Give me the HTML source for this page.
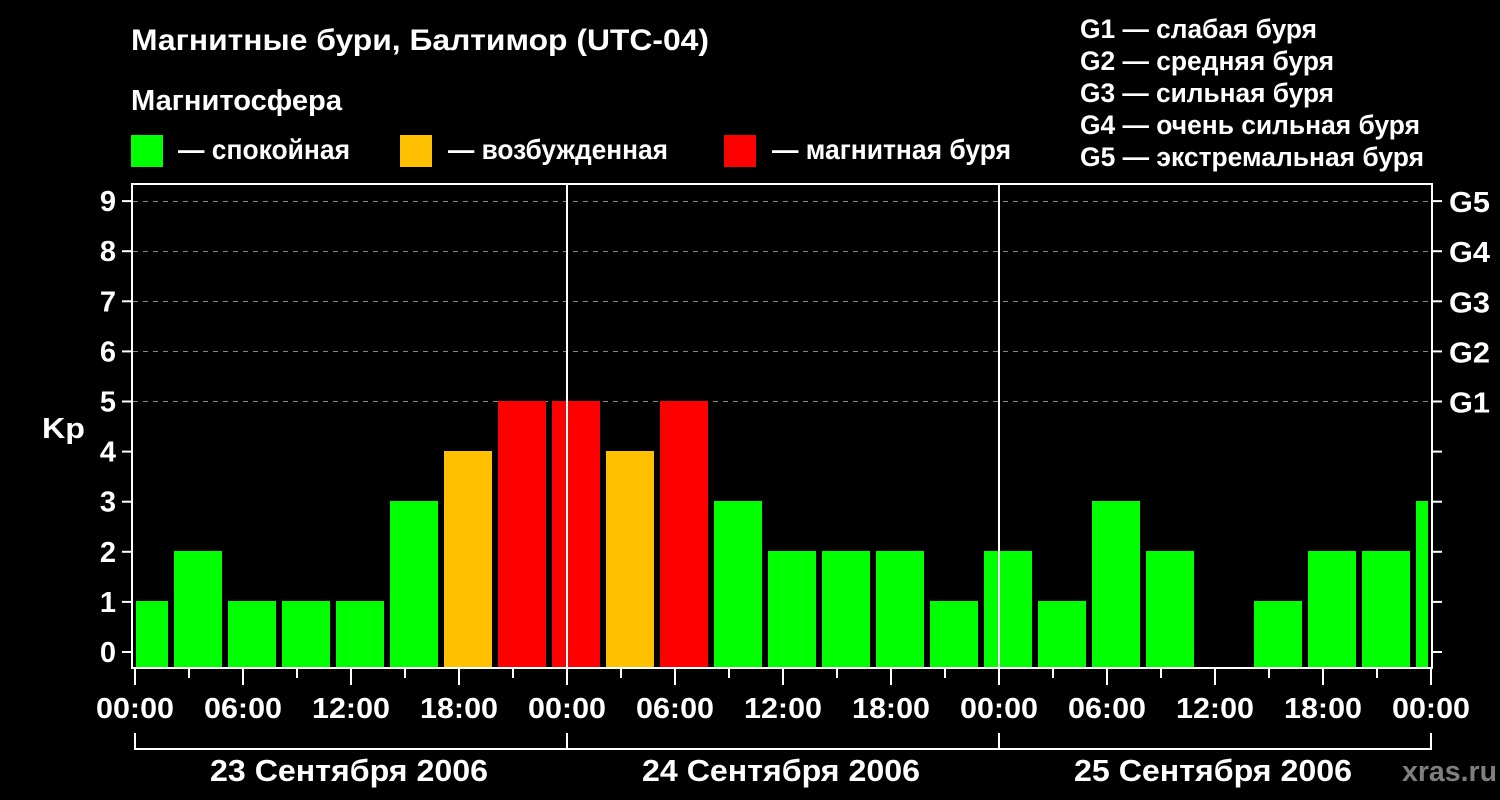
<!DOCTYPE html>
<html><head><meta charset="utf-8"><style>
html,body{margin:0;padding:0;background:#000;}
svg{display:block}
text{font-family:"Liberation Sans",sans-serif;font-weight:bold;fill:#fff}
</style></head><body>
<svg width="1500" height="800" viewBox="0 0 1500 800" xmlns="http://www.w3.org/2000/svg">
<rect width="1500" height="800" fill="#000"/>
<text x="131" y="50" font-size="30" textLength="578" lengthAdjust="spacingAndGlyphs">Магнитные бури, Балтимор (UTC-04)</text>
<text x="131" y="110" font-size="29" textLength="211" lengthAdjust="spacingAndGlyphs">Магнитосфера</text>
<rect x="131" y="135" width="32" height="32" fill="#00ff00"/>
<rect x="400" y="135" width="32" height="32" fill="#ffc000"/>
<rect x="724" y="135" width="32" height="32" fill="#ff0000"/>
<text x="178" y="159" font-size="28" textLength="172" lengthAdjust="spacingAndGlyphs">— спокойная</text>
<text x="448" y="159" font-size="28" textLength="220" lengthAdjust="spacingAndGlyphs">— возбужденная</text>
<text x="772" y="159" font-size="28" textLength="239" lengthAdjust="spacingAndGlyphs">— магнитная буря</text>
<g font-size="27">
<text x="1080" y="38" textLength="237" lengthAdjust="spacingAndGlyphs">G1 — слабая буря</text>
<text x="1080" y="70" textLength="254" lengthAdjust="spacingAndGlyphs">G2 — средняя буря</text>
<text x="1080" y="102" textLength="254" lengthAdjust="spacingAndGlyphs">G3 — сильная буря</text>
<text x="1080" y="134" textLength="340" lengthAdjust="spacingAndGlyphs">G4 — очень сильная буря</text>
<text x="1080" y="166" textLength="344" lengthAdjust="spacingAndGlyphs">G5 — экстремальная буря</text>
</g>
<g id="grid" stroke="#888" stroke-width="1" stroke-dasharray="5,5">
<line x1="133" y1="201.5" x2="1433" y2="201.5"/>
<line x1="133" y1="251.5" x2="1433" y2="251.5"/>
<line x1="133" y1="301.5" x2="1433" y2="301.5"/>
<line x1="133" y1="351.5" x2="1433" y2="351.5"/>
<line x1="133" y1="401.5" x2="1433" y2="401.5"/>
</g>
<g id="bars"></g>
<g stroke="#fff" stroke-width="2" fill="none">
<rect x="132" y="184" width="1300" height="484"/>
<line x1="567" y1="184" x2="567" y2="668"/>
<line x1="999" y1="184" x2="999" y2="668"/>
<polyline points="135,733 135,749 1431,749 1431,733"/>
<line x1="567" y1="733" x2="567" y2="749"/>
<line x1="999" y1="733" x2="999" y2="749"/>
</g>
<g id="ticks" stroke="#fff" stroke-width="2"></g>
<g id="labels" font-size="29"></g>
<text x="42" y="438" font-size="29" textLength="43" lengthAdjust="spacingAndGlyphs">Kp</text>
<g font-size="31" text-anchor="middle">
<text x="349" y="781" textLength="278" lengthAdjust="spacingAndGlyphs">23 Сентября 2006</text>
<text x="781" y="781" textLength="278" lengthAdjust="spacingAndGlyphs">24 Сентября 2006</text>
<text x="1213" y="781" textLength="278" lengthAdjust="spacingAndGlyphs">25 Сентября 2006</text>
</g>
<text x="1402" y="781" font-size="29" textLength="95" lengthAdjust="spacingAndGlyphs" style="fill:#7f7f7f">xras.ru</text>
</svg>
<script>
var ns="http://www.w3.org/2000/svg";
function el(p,t,a,txt){var e=document.createElementNS(ns,t);for(var k in a)e.setAttribute(k,a[k]);if(txt)e.textContent=txt;document.getElementById(p).appendChild(e);}
var v=[1,2,1,1,1,3,4,5,5,4,5,3,2,2,2,1,2,1,3,2,0,1,2,2,3];
function col(k){return k>=5?"#ff0000":(k==4?"#ffc000":"#00ff00");}
v.forEach(function(k,i){if(!k)return;var c=144+54*i,l=c-24,r=c+24;if(l<136)l=136;if(r>1428)r=1428;var top=652-50*k-1;el("bars","rect",{x:l,y:top,width:r-l,height:667-top,fill:col(k)});});
for(var k=0;k<=9;k++){var y=652-50.1*k;el("ticks","line",{x1:122,y1:y,x2:132,y2:y});el("ticks","line",{x1:1432,y1:y,x2:1442,y2:y});
el("labels","text",{x:116,y:y+10,"text-anchor":"end"},String(k));
if(k>=5)el("labels","text",{x:1449,y:y+11,"textLength":"41","lengthAdjust":"spacingAndGlyphs"},"G"+(k-4));}
var hl=["00:00","06:00","12:00","18:00"];
for(var h=0;h<=72;h+=3){var x=135+18*h;var maj=h%6==0;el("ticks","line",{x1:x,y1:668,x2:x,y2:maj?685:678});
if(maj)el("labels","text",{x:x,y:718,"text-anchor":"middle","font-size":"29","textLength":"78","lengthAdjust":"spacingAndGlyphs"},hl[(h%24)/6]);}
</script>
</body></html>
